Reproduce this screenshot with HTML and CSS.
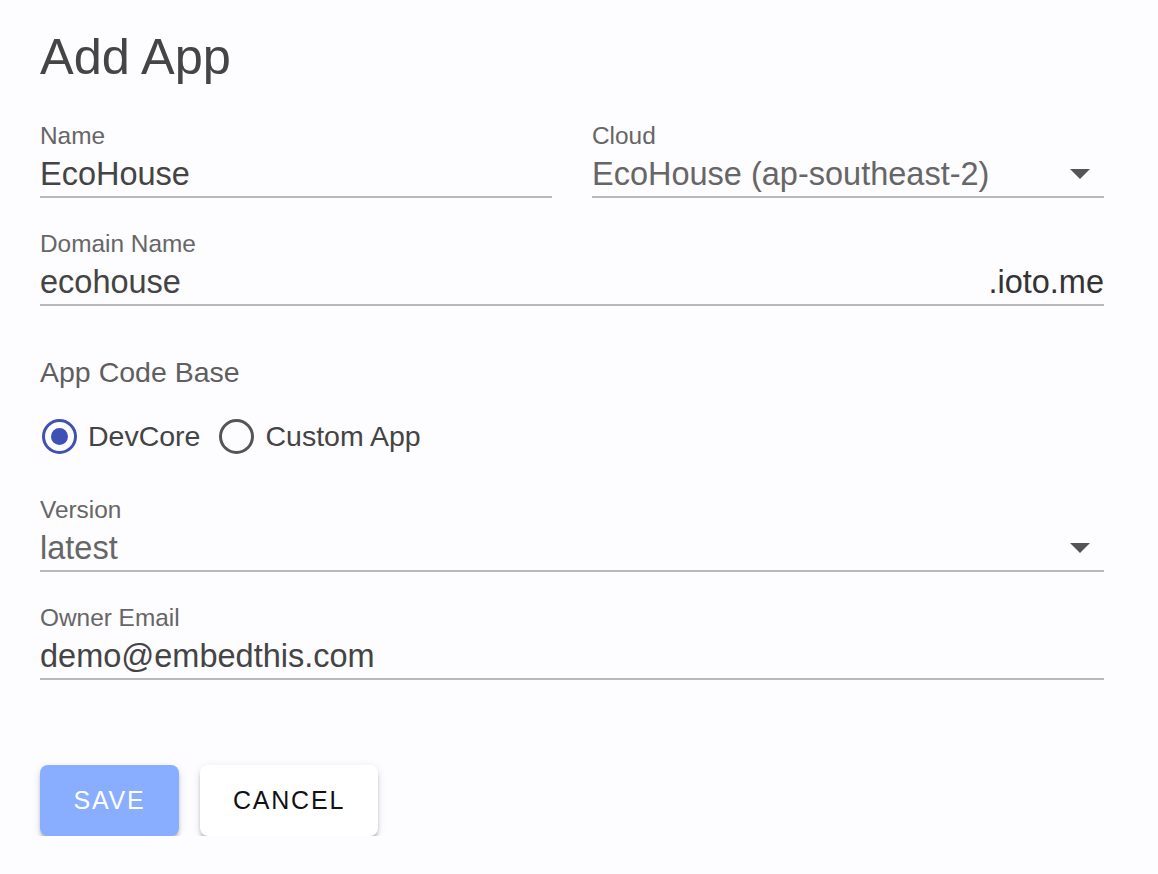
FILE: index.html
```html
<!DOCTYPE html>
<html lang="en">
<head>
<meta charset="utf-8">
<title>Add App</title>
<link rel="stylesheet" href="styles.css">
</head>
<body>
<div class="page">
  <h1 class="title">Add App</h1>
  <div class="row two">
    <div class="field">
      <div class="label">Name</div>
      <div class="control"><span class="value">EcoHouse</span></div>
    </div>
    <div class="field">
      <div class="label">Cloud</div>
      <div class="control select"><span class="value muted">EcoHouse (ap-southeast-2)</span>
        <svg class="arrow" width="20" height="10" viewBox="0 0 20 10"><path d="M0 0h20L10 10z"/></svg>
      </div>
    </div>
  </div>
  <div class="field gap">
    <div class="label">Domain Name</div>
    <div class="control"><span class="value">ecohouse</span><span class="suffix">.ioto.me</span></div>
  </div>
  <div class="section">App Code Base</div>
  <div class="radios">
    <label class="radio">
      <span class="circle checked"><span class="dot"></span></span>
      <span class="rlabel">DevCore</span>
    </label>
    <label class="radio">
      <span class="circle"></span>
      <span class="rlabel">Custom App</span>
    </label>
  </div>
  <div class="field version">
    <div class="label">Version</div>
    <div class="control select"><span class="value muted">latest</span>
      <svg class="arrow" width="20" height="10" viewBox="0 0 20 10"><path d="M0 0h20L10 10z"/></svg>
    </div>
  </div>
  <div class="field gap">
    <div class="label">Owner Email</div>
    <div class="control"><span class="value">demo@embedthis.com</span></div>
  </div>
  <div class="buttons">
    <button class="btn save">SAVE</button>
    <button class="btn cancel">CANCEL</button>
  </div>
</div>
</body>
</html>
```

FILE: styles.css
```css
html, body {
  margin: 0;
  padding: 0;
  background: #fdfcfe;
}
body {
  font-family: "Liberation Sans", Arial, sans-serif;
  color: #444;
}
.page {
  padding: 27px 54px 0 40px;
}
.title {
  margin: 0;
  font-size: 50.5px;
  font-weight: normal;
  line-height: 60px;
  color: #454545;
}
.row.two {
  margin-top: 35px;
  display: grid;
  grid-template-columns: 1fr 1fr;
  column-gap: 40px;
}
.field.gap {
  margin-top: 32px;
}
.label {
  font-size: 24.4px;
  line-height: 28px;
  color: #666;
  margin-bottom: 4px;
}
.control {
  display: flex;
  align-items: center;
  height: 40px;
  padding-bottom: 2px;
  border-bottom: 2px solid #b9b9b9;
}
.value {
  flex: 1;
  font-size: 32.5px;
  line-height: 40px;
  color: #444;
}
.value.muted {
  color: #666;
}
.suffix {
  font-size: 32.5px;
  line-height: 40px;
  color: #333;
}
.arrow {
  fill: #555;
  margin-right: 14px;
  margin-top: 0;
}
.section {
  margin-top: 49px;
  font-size: 28.5px;
  line-height: 34px;
  color: #5f5f5f;
}
.radios {
  margin-top: 23px;
  display: flex;
  align-items: center;
  height: 48px;
}
.radio {
  display: flex;
  align-items: center;
  margin-right: 19px;
}
.circle {
  box-sizing: border-box;
  width: 35px;
  height: 35px;
  border-radius: 50%;
  border: 3.5px solid #555;
  display: flex;
  align-items: center;
  justify-content: center;
  margin-left: 2px;
  margin-right: 11px;
}
.radio + .radio .circle {
  margin-left: 0;
}
.circle.checked {
  border-color: #3f51b5;
}
.dot {
  width: 17px;
  height: 17px;
  border-radius: 50%;
  background: #3f51b5;
}
.rlabel {
  font-size: 28.5px;
  line-height: 34px;
  color: #444;
}
.field.version {
  margin-top: 36px;
}
.buttons {
  margin-top: 85px;
  display: flex;
  gap: 21px;
}
.btn {
  height: 71px;
  border: none;
  border-radius: 8px;
  font-family: "Liberation Sans", Arial, sans-serif;
  font-size: 25px;
  letter-spacing: 1.8px;
  padding: 0;
  box-shadow: 0 4px 4px -1px rgba(0,0,0,0.28), 0 2px 10px rgba(0,0,0,0.10);
}
.save {
  width: 139px;
  background: #8aaeff;
  color: #fff;
}
.cancel {
  width: 178px;
  background: #fff;
  color: #111;
}
```
